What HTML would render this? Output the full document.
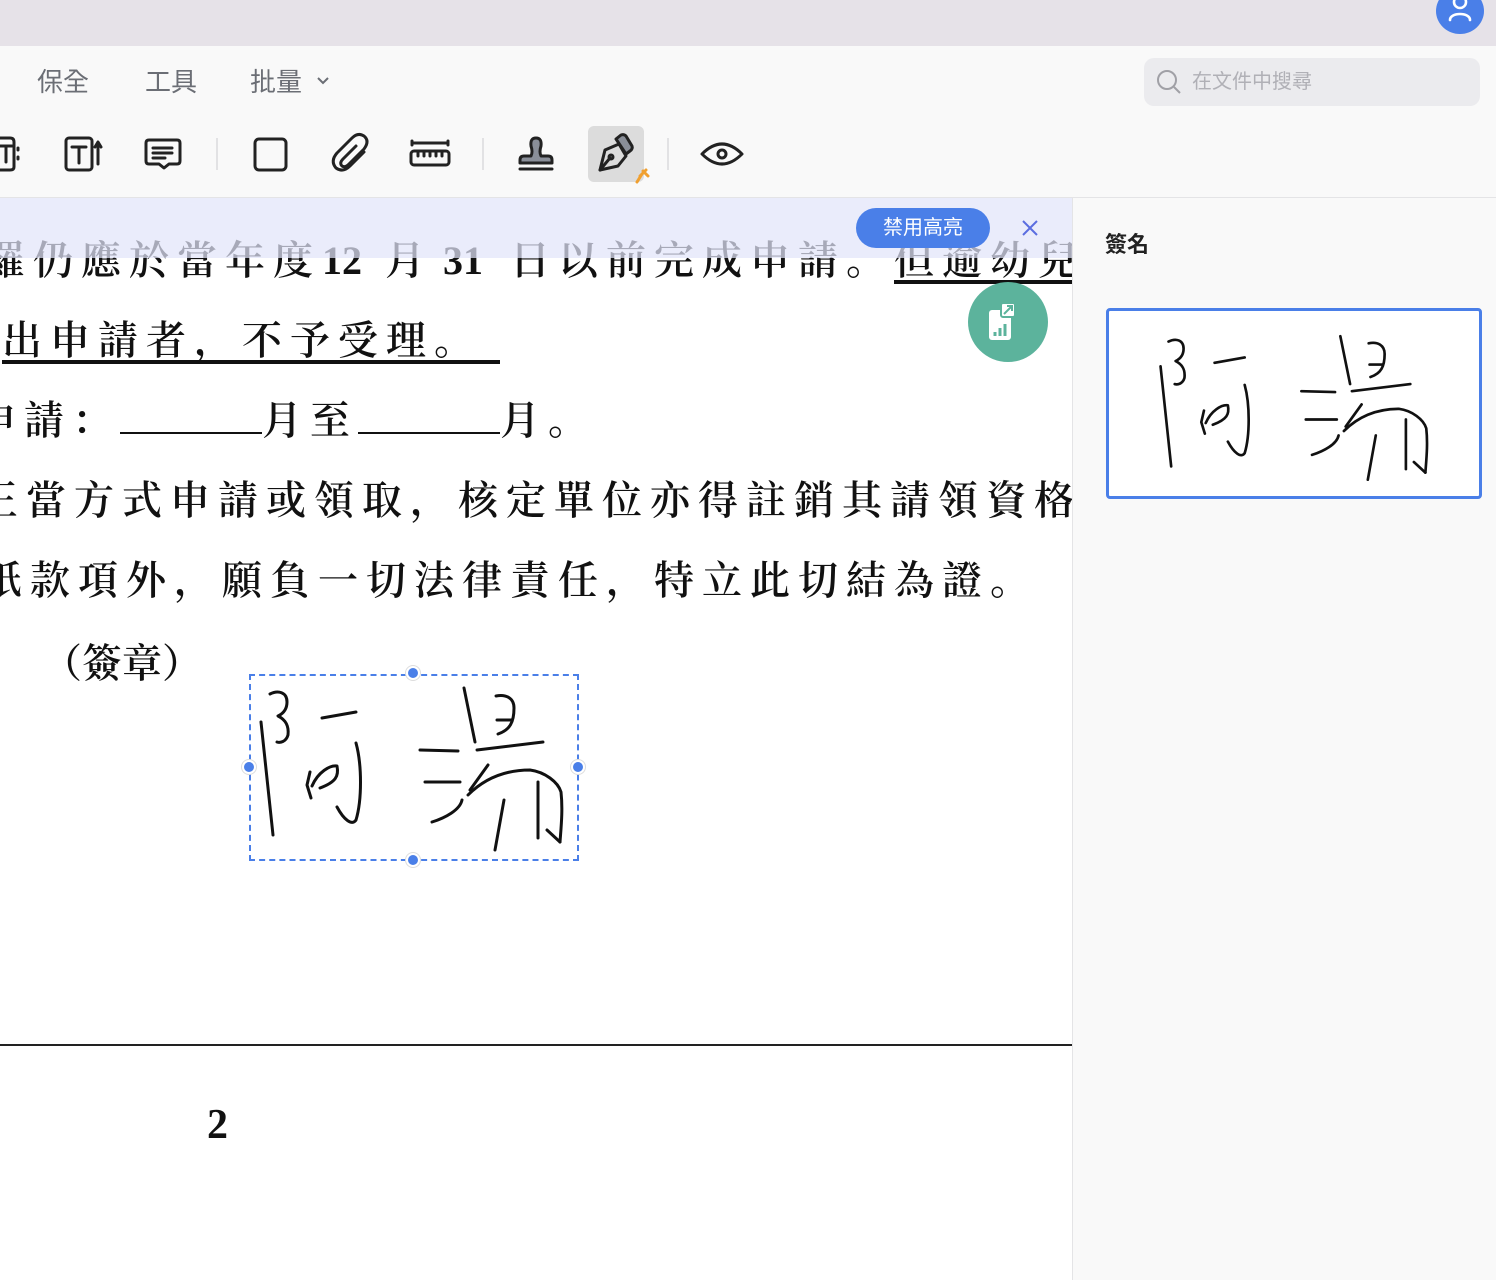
<!DOCTYPE html>
<html><head><meta charset="utf-8">
<style>
*{margin:0;padding:0;box-sizing:border-box}
body{width:1496px;height:1280px;overflow:hidden;background:#fff;position:relative;font-family:"Liberation Sans","Noto Sans CJK TC",sans-serif}
.abs{position:absolute}
.top{left:0;top:0;width:1496px;height:46px;background:#e6e2e8}
.bar{left:0;top:46px;width:1496px;height:152px;background:#f9f9f9;border-bottom:1px solid #e4e4e6}
.menu{top:64px;font-size:26px;color:#6b6e75;line-height:36px}
.doc{left:0;top:198px;width:1072px;height:1082px;background:#fff;overflow:hidden}
.ln{position:absolute;font-family:"Liberation Serif","Noto Serif CJK SC","Noto Serif CJK TC",serif;font-size:40px;line-height:40px;letter-spacing:8px;color:#111;white-space:nowrap;font-weight:600}
.blank{display:inline-block;border-bottom:2px solid #111;height:30px;vertical-align:baseline}
.side{left:1072px;top:198px;width:424px;height:1082px;background:#f9f9f9;border-left:1px solid #e4e4e6}
.sep{top:138px;width:2px;height:32px;background:#e2e2e4}
.h{width:14px;height:14px;border-radius:50%;background:#4a7fe8;border:2px solid #fff;box-shadow:0 0 0 1px #ddd}
</style></head><body>
<svg width="0" height="0" style="position:absolute">
<defs>
<g id="sig" fill="none" stroke="#111" stroke-width="3" stroke-linecap="round" stroke-linejoin="round">
<path d="M21 62 L33 175"/>
<path d="M30 34 C38 30 47 32 47 42 C47 52 40 55 38 56 C46 60 49 66 48 75 C46 82 40 83 37 82"/>
<path d="M82 58 L116 52"/>
<path d="M70 112 L67 125 L71 138"/>
<path d="M72 126 C78 112 90 105 97 106 C99 116 96 122 80 128"/>
<path d="M116 83 C122 105 122 140 116 160 C112 166 104 160 97 147"/>
<path d="M224 28 L235 82"/>
<path d="M256 36 C266 34 274 38 274 48 C274 62 270 70 258 74"/>
<path d="M257 60 L272 60"/>
<path d="M237 90 L303 82"/>
<path d="M180 90 L218 91"/>
<path d="M185 122 L220 122"/>
<path d="M248 105 L230 130"/>
<path d="M228 135 C245 118 265 110 290 110 C305 112 318 122 321 132 C323 150 321 168 320 182"/>
<path d="M298 122 L298 178"/>
<path d="M307 170 L320 182"/>
<path d="M264 140 L255 190"/>
<path d="M222 140 C220 150 205 158 192 162"/>
</g>
</defs>
</svg>

<div class="abs top"></div>
<div class="abs" style="left:1436px;top:-12px;width:48px;height:46px;border-radius:50%;background:#4a7fe8"></div>
<svg class="abs" style="left:1446px;top:-6px" width="28" height="30" viewBox="0 0 28 30" fill="none" stroke="#fff" stroke-width="2.6" stroke-linecap="round"><circle cx="14" cy="8" r="6"/><path d="M4 26 C4 18 24 18 24 26"/></svg>

<div class="abs bar"></div>
<div class="abs menu" style="left:37px">保全</div>
<div class="abs menu" style="left:145px">工具</div>
<div class="abs menu" style="left:250px">批量</div>
<svg class="abs" style="left:316px;top:76px" width="14" height="10" viewBox="0 0 14 10" fill="none" stroke="#6b6e75" stroke-width="2"><path d="M2 2 L7 7 L12 2"/></svg>

<div class="abs" style="left:1144px;top:58px;width:336px;height:48px;background:#ebebee;border-radius:10px"></div>
<svg class="abs" style="left:1155px;top:68px" width="28" height="28" viewBox="0 0 28 28" fill="none" stroke="#a0a0a6" stroke-width="2"><circle cx="12" cy="12" r="9"/><path d="M19 19 L25 25"/></svg>
<div class="abs" style="left:1192px;top:68px;font-size:20px;color:#b0b0b6;line-height:28px">在文件中搜尋</div>

<svg class="abs" style="left:0;top:46px" width="760" height="152" viewBox="0 46 760 152" fill="none" stroke="#222" stroke-width="3" stroke-linecap="round" stroke-linejoin="round">
<path d="M-4 138 H10 Q14 138 14 142 V167 Q14 170 10 170 H-4"/><path d="M0 146 H12 M6 146 V162"/><path d="M18 148 V150 M18 157 V159"/>
<rect x="66" y="138" width="26" height="32" rx="3"/><path d="M72 147 H86 M79 147 V163"/><path d="M98 164 V143 M95 147 L98 142 L101 147"/>
<path d="M149 140 H177 Q180 140 180 143 V161 Q180 164 177 164 H169 L164 168 L159 164 H149 Q146 164 146 161 V143 Q146 140 149 140Z"/><path d="M153 148 H172 M153 153 H172 M153 158 H165"/>
<rect x="255" y="139" width="31" height="31" rx="4"/>
<path d="M356 146 L343 159 Q339 163 342 166 Q345 168 349 164 L364 149 Q370 141 364 136 Q358 132 352 138 L337 153 Q330 161 336 168 Q343 173 350 166 L364 152"/>
<path d="M412 141 V145 M448 141 V145 M412 143 H448"/><rect x="411" y="151" width="38" height="14" rx="3"/><path d="M418 151 V156 M424 151 V156 M430 151 V156 M436 151 V156 M442 151 V156"/>
<path d="M536 138 Q530 138 531 146 Q533 152 531 156 H524 Q520 156 520 160 V163 H552 V160 Q552 156 548 156 H541 Q539 152 541 146 Q542 138 536 138Z" fill="#8a8f99"/><path d="M520 169 H552"/>
<path d="M702 154 Q722 134 742 154 Q722 174 702 154Z"/><circle cx="722" cy="154" r="4"/>
</svg>
<div class="abs sep" style="left:216px"></div>
<div class="abs sep" style="left:482px"></div>
<div class="abs sep" style="left:667px"></div>
<div class="abs" style="left:588px;top:126px;width:56px;height:56px;background:#dcdcdc;border-radius:6px"></div>
<svg class="abs" style="left:588px;top:126px" width="70" height="64" viewBox="0 0 70 64" fill="none" stroke="#222" stroke-width="3" stroke-linejoin="round" stroke-linecap="round">
<path d="M12 44 L17 24 L31 18 L38 30 L30 40 Z" fill="#dcdcdc"/><path d="M12 44 L22 32"/><circle cx="23" cy="31" r="2"/>
<path d="M28 13 L33 9 Q36 8 38 10 L44 20 Q45 23 42 25 L38 28 Z" fill="#8a8f99"/>
<path d="M52 50 L58 44 M55 45 L60 50 M54 48 L49 56" stroke="#f0a030" stroke-width="3"/>
</svg>

<div class="abs doc">
  <div class="ln" style="left:-15px;top:43px">羅仍應於當年度</div>
  <div class="ln" style="left:322px;top:43px;letter-spacing:0">12</div>
  <div class="ln" style="left:385px;top:43px">月</div>
  <div class="ln" style="left:443px;top:43px;letter-spacing:0">31</div>
  <div class="ln" style="left:510px;top:43px">日以前完成申請。<span style="text-decoration:underline;text-underline-offset:6px">但逾幼兒</span></div>
  <div class="ln" style="left:2px;top:123px;text-decoration:underline;text-underline-offset:6px">出申請者，不予受理。&nbsp;</div>
  <div class="ln" style="left:-24px;top:203px">申請：<span class="blank" style="width:142px"></span>月至<span class="blank" style="width:142px"></span>月。</div>
  <div class="ln" style="left:-22px;top:283px">王當方式申請或領取，核定單位亦得註銷其請領資格</div>
  <div class="ln" style="left:-18px;top:363px">紙款項外，願負一切法律責任，特立此切結為證。</div>
  <div class="ln" style="left:42px;top:443px;letter-spacing:0;font-family:'Noto Serif CJK SC',serif">（簽章）</div>
  <div class="abs" style="left:0;top:0;width:1072px;height:60px;background:rgba(226,229,250,0.72)"></div>
  <div class="abs" style="left:0;top:846px;width:1072px;height:2px;background:#222"></div>
  <div class="abs" style="left:207px;top:903px;font-family:'Liberation Serif',serif;font-size:42px;font-weight:bold;color:#111">2</div>
</div>

<div class="abs" style="left:856px;top:208px;width:134px;height:40px;border-radius:20px;background:#4a7fe8;color:#fff;font-size:20px;line-height:40px;text-align:center">禁用高亮</div>
<svg class="abs" style="left:1020px;top:218px" width="20" height="20" viewBox="0 0 20 20" stroke="#5b6de0" stroke-width="2"><path d="M3 3 L17 17 M17 3 L3 17"/></svg>
<div class="abs" style="left:968px;top:282px;width:80px;height:80px;border-radius:50%;background:#5cb39c"></div>
<svg class="abs" style="left:986px;top:300px" width="44" height="44" viewBox="0 0 44 44"><rect x="3" y="10" width="22" height="30" rx="3" fill="#fff"/><rect x="15" y="3" width="14" height="14" rx="2" fill="#fff" stroke="#5cb39c" stroke-width="2"/><path d="M18 14 L26 6 M21 6 H26 V11" stroke="#5cb39c" stroke-width="2" fill="none"/><path d="M9 36 V32 M14 36 V28 M19 36 V24" stroke="#5cb39c" stroke-width="3"/></svg>

<div class="abs" style="left:249px;top:674px;width:330px;height:187px;border:2px dashed #4a7fe8"></div>
<svg class="abs" style="left:240px;top:660px" width="350" height="210" viewBox="0 0 350 210"><use href="#sig"/></svg>
<div class="abs h" style="left:406px;top:666px"></div>
<div class="abs h" style="left:406px;top:853px"></div>
<div class="abs h" style="left:242px;top:760px"></div>
<div class="abs h" style="left:571px;top:760px"></div>

<div class="abs side"></div>
<div class="abs" style="left:1105px;top:230px;font-size:22px;font-weight:bold;color:#222;line-height:30px">簽名</div>
<div class="abs" style="left:1106px;top:308px;width:376px;height:191px;border:3px solid #4a7fe8;border-radius:4px;background:#fff"></div>
<svg class="abs" style="left:1126px;top:300px" width="350" height="200" viewBox="0 0 350 210"><g transform="translate(8,12) scale(0.93)"><use href="#sig"/></g></svg>
</body></html>
